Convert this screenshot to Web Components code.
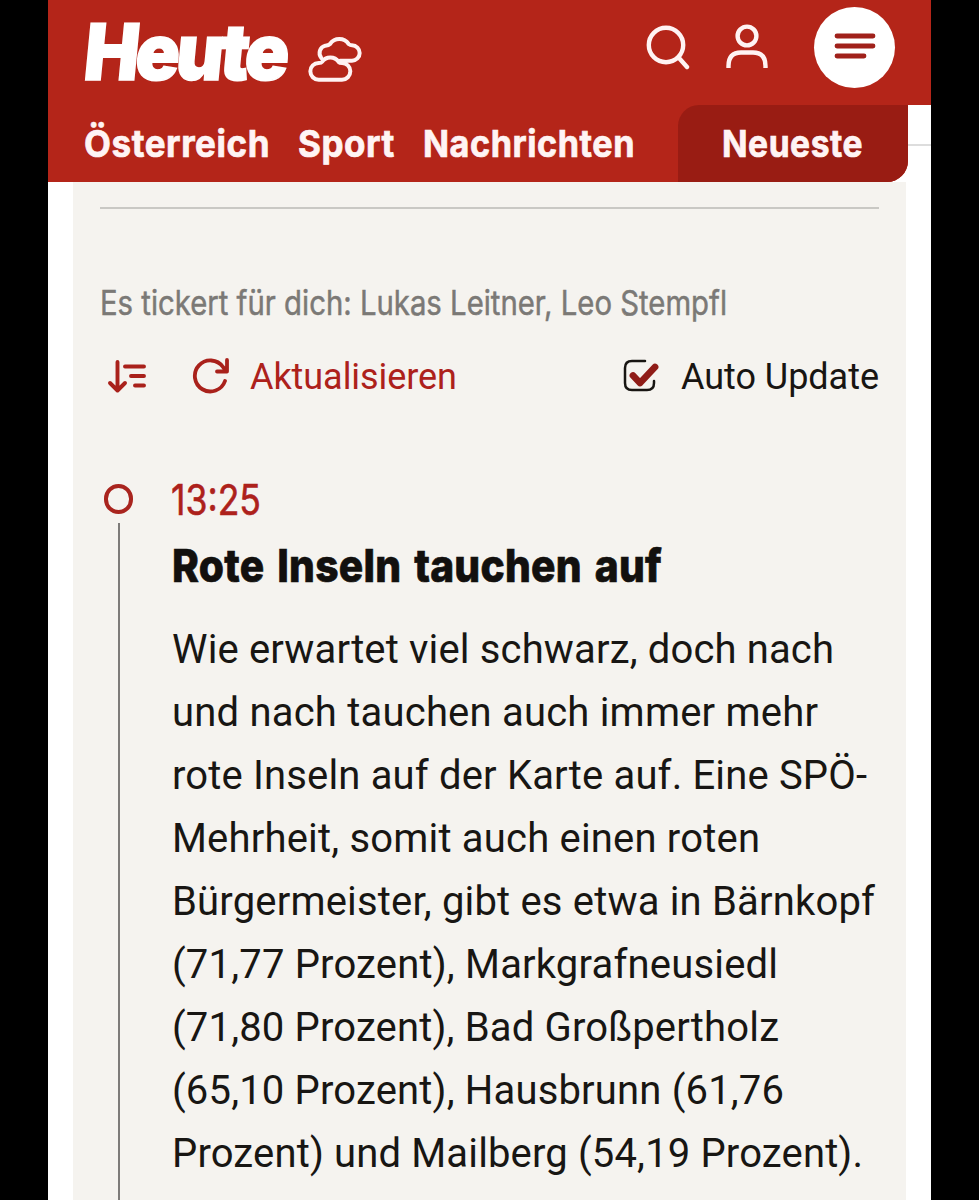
<!DOCTYPE html>
<html lang="de">
<head>
<meta charset="utf-8">
<title>Heute – Liveticker</title>
<style>
html,body{margin:0;background:#000}
body{font-family:Roboto,"Liberation Sans",sans-serif;height:1200px;overflow:hidden}
</style>
</head>
<body>
<ticker-app></ticker-app>
<script>
function define(name, html, ready){
  const t = document.createElement('template');
  t.innerHTML = html;
  customElements.define(name, class extends HTMLElement{
    constructor(){ super(); this.attachShadow({mode:'open'}).appendChild(t.content.cloneNode(true)); }
    connectedCallback(){ if(ready) ready(this); }
  });
}

/* One line of text set to an exact measure, by glyph width or by tracking. */
define('fit-text', `
<style>
:host{display:block;flex:none;white-space:nowrap}
span{display:inline-block;transform-origin:0 50%}
</style><span><slot></slot></span>`, el => {
  const s = el.shadowRoot.querySelector('span'), w = +el.getAttribute('w');
  el.style.width = w + 'px';
  const n = parseFloat(getComputedStyle(s).width);
  if(!n) return;
  if(el.hasAttribute('track')) s.style.letterSpacing = (w - n) / (el.textContent.length - 1) + 'px';
  else s.style.transform = 'scaleX(' + w / n + ')';
});

define('top-bar', `
<style>
:host{display:flex;height:105px;background:#b42519;box-sizing:border-box;padding:0 36px 0 37px;align-items:center;color:#fff}
.logo{font-family:Inter,Roboto,sans-serif;font-size:78px;font-weight:900;line-height:104px;letter-spacing:-4px;-webkit-text-stroke:1.600px #fff;transform:skewX(-5.500deg);margin-top:-1px}
svg{display:block;flex:none;fill:none;stroke:#fff3f3;stroke-width:4.400;stroke-linecap:round;stroke-linejoin:round}
.cloud{margin:12px 0 0 20px;stroke-width:12}
.search{margin:-11px 0 0 auto}
.user{margin:-12px 0 0 33px}
.menu{width:81px;height:81px;border-radius:50%;background:#fff;display:grid;place-items:center;margin:-11px 0 0 46px}
.menu svg{stroke:#a0211b;stroke-width:4.800;margin-top:-2px}
</style>
<fit-text class="logo" w="201">Heute</fit-text>
<svg class="cloud" width="58" height="50" viewBox="800 100 174 150"><path d="M838 237A25 25 0 0 1 838 187Q846 187 848 184A30 30 0 0 1 898 184Q901 187 908 187A25 25 0 0 1 908 237ZM846 172A23 23 0 0 1 858 135Q868 134 872 130A34 34 0 0 1 928 130Q933 134 938 134A23 23 0 0 1 938 180H902"/></svg>
<svg class="search" width="46" height="46" viewBox="0 0 46 46"><circle cx="21" cy="21" r="17.200"/><path d="M34 34L42 43"/></svg>
<svg class="user" width="44" height="46" viewBox="0 0 44 46"><circle cx="23" cy="12" r="9.400"/><path stroke-linecap="butt" d="M4.500 44V42Q4.500 28.500 17 28.500H29Q41.500 28.500 41.500 42V44"/></svg>
<div class="menu"><svg width="42" height="28" viewBox="0 0 42 28"><path d="M3 4H39M3 14H39M3 24H30"/></svg></div>`);

define('nav-bar', `
<style>
:host{display:flex;height:77px;background:linear-gradient(to bottom,transparent 39px,#ddd 39px,#ddd 41px,transparent 41px) right/23px 100% no-repeat,#fff;padding-right:23px}
nav{flex:1;display:flex;align-items:center;background:#b42519;border-bottom-right-radius:21px;overflow:hidden;padding-left:36px;font-family:Inter,Roboto,sans-serif;font-size:37.500px;font-weight:700;letter-spacing:.6px;-webkit-text-stroke:.7px #fff4f4;color:#fff4f4;line-height:77px}
.b{margin-left:28px}.c{margin-left:28px}
.tab{margin-left:auto;width:186px;padding-left:44px;height:77px;background:#991c13;border-top-left-radius:21px}
</style>
<nav><fit-text w="186">Österreich</fit-text><fit-text class="b" w="97">Sport</fit-text><fit-text class="c" w="212">Nachrichten</fit-text>
<div class="tab"><fit-text w="141">Neueste</fit-text></div></nav>`);

define('ticker-actions', `
<style>
:host{display:flex;align-items:center;height:42px;font-size:36px;line-height:42px;color:#181512}
fit-text{padding-top:2px}
svg{display:block;flex:none;fill:none;stroke:#a9211b;stroke-width:4;stroke-linecap:round;stroke-linejoin:round}
.sort{margin-left:7px}
.re{margin-left:43px}
.red{color:#ad211b;margin-left:20px}
.chk{margin-left:auto;margin-right:22px}
</style>
<svg class="sort" width="42" height="38" viewBox="0 0 42 38"><path d="M10.500 5V33M3 26L10.500 33.500L18 26M18 9.500H37M24 19H37M28 28.500H37" stroke-width="3.900"/></svg>
<svg class="re" width="38" height="38" viewBox="0 0 38 38"><path d="M33 24A15.500 15.500 0 1 1 31 10L34 13.500M35 3V14.500H25" stroke-width="3.800"/></svg>
<fit-text class="red" w="207" track>Aktualisieren</fit-text>
<svg class="chk" width="38" height="38" viewBox="0 0 38 38"><path d="M24 4H11Q4 4 4 11V26Q4 33 11 33H26Q33 33 33 26V24" stroke="#181512" stroke-width="2.500"/><path d="M12 18.500L19 26L34 10" stroke="#8f1c17" stroke-width="6.800"/></svg>
<fit-text w="198" track>Auto Update</fit-text>`);

define('ticker-entry', `
<style>
:host{display:grid;grid-template-columns:37px 1fr;column-gap:35px}
.rail{display:flex;flex-direction:column;align-items:center}
.ring{width:21.500px;height:21.500px;border:4px solid #a9241e;border-radius:50%;margin-top:11px}
.line{width:2px;flex:1;background:#7d7b79;margin-top:9px}
.time{font-family:Inter,Roboto,sans-serif;font-size:42.500px;line-height:52px;color:#ad211b;-webkit-text-stroke:.6px #ad211b;margin:1px 0 0 -1px}
.head{font-family:Inter,Roboto,sans-serif;font-size:45.500px;font-weight:800;line-height:56px;color:#12100e;-webkit-text-stroke:.7px #12100e;margin-top:12px;letter-spacing:.3px;word-spacing:4px}
.body{font-size:40px;line-height:63px;color:#181613;margin-top:24px;padding-bottom:40px}
</style>
<div class="rail"><div class="ring"></div><div class="line"></div></div>
<div><div class="time"><slot name="time"></slot></div>
<div class="head"><slot name="head"></slot></div>
<div class="body"><slot></slot></div></div>`);

define('ticker-app', `
<style>
:host{display:block;width:883px;height:1200px;margin-left:48px;background:#fff;overflow:hidden}
main{margin:0 25px;height:1018px;overflow:hidden;background:#f5f3ef;padding:0 27px;display:flex;flex-direction:column}
hr{border:0;height:2px;background:#c9c8c4;margin:25px 0 0;width:779px;flex:none}
.by{font-family:Inter,Roboto,sans-serif;font-size:33.700px;line-height:42px;color:#7b7976;-webkit-text-stroke:.5px #7b7976;margin-top:73px}
ticker-actions{margin-top:31px;flex:none}
ticker-entry{margin-top:76px;flex:none}
</style>
<top-bar></top-bar>
<nav-bar></nav-bar>
<main>
<hr>
<fit-text class="by" w="627">Es tickert für dich: Lukas Leitner, Leo Stempfl</fit-text>
<ticker-actions></ticker-actions>
<ticker-entry>
<fit-text slot="time" w="90">13:25</fit-text>
<fit-text slot="head" w="490">Rote Inseln tauchen auf</fit-text>
<fit-text w="662" track>Wie erwartet viel schwarz, doch nach</fit-text>
<fit-text w="646" track>und nach tauchen auch immer mehr</fit-text>
<fit-text w="695" track>rote Inseln auf der Karte auf. Eine SPÖ-</fit-text>
<fit-text w="588" track>Mehrheit, somit auch einen roten</fit-text>
<fit-text w="703" track>Bürgermeister, gibt es etwa in Bärnkopf</fit-text>
<fit-text w="606" track>(71,77 Prozent), Markgrafneusiedl</fit-text>
<fit-text w="607" track>(71,80 Prozent), Bad Großpertholz</fit-text>
<fit-text w="612" track>(65,10 Prozent), Hausbrunn (61,76</fit-text>
<fit-text w="691" track>Prozent) und Mailberg (54,19 Prozent).</fit-text>
</ticker-entry>
</main>`);
</script>
</body>
</html>
